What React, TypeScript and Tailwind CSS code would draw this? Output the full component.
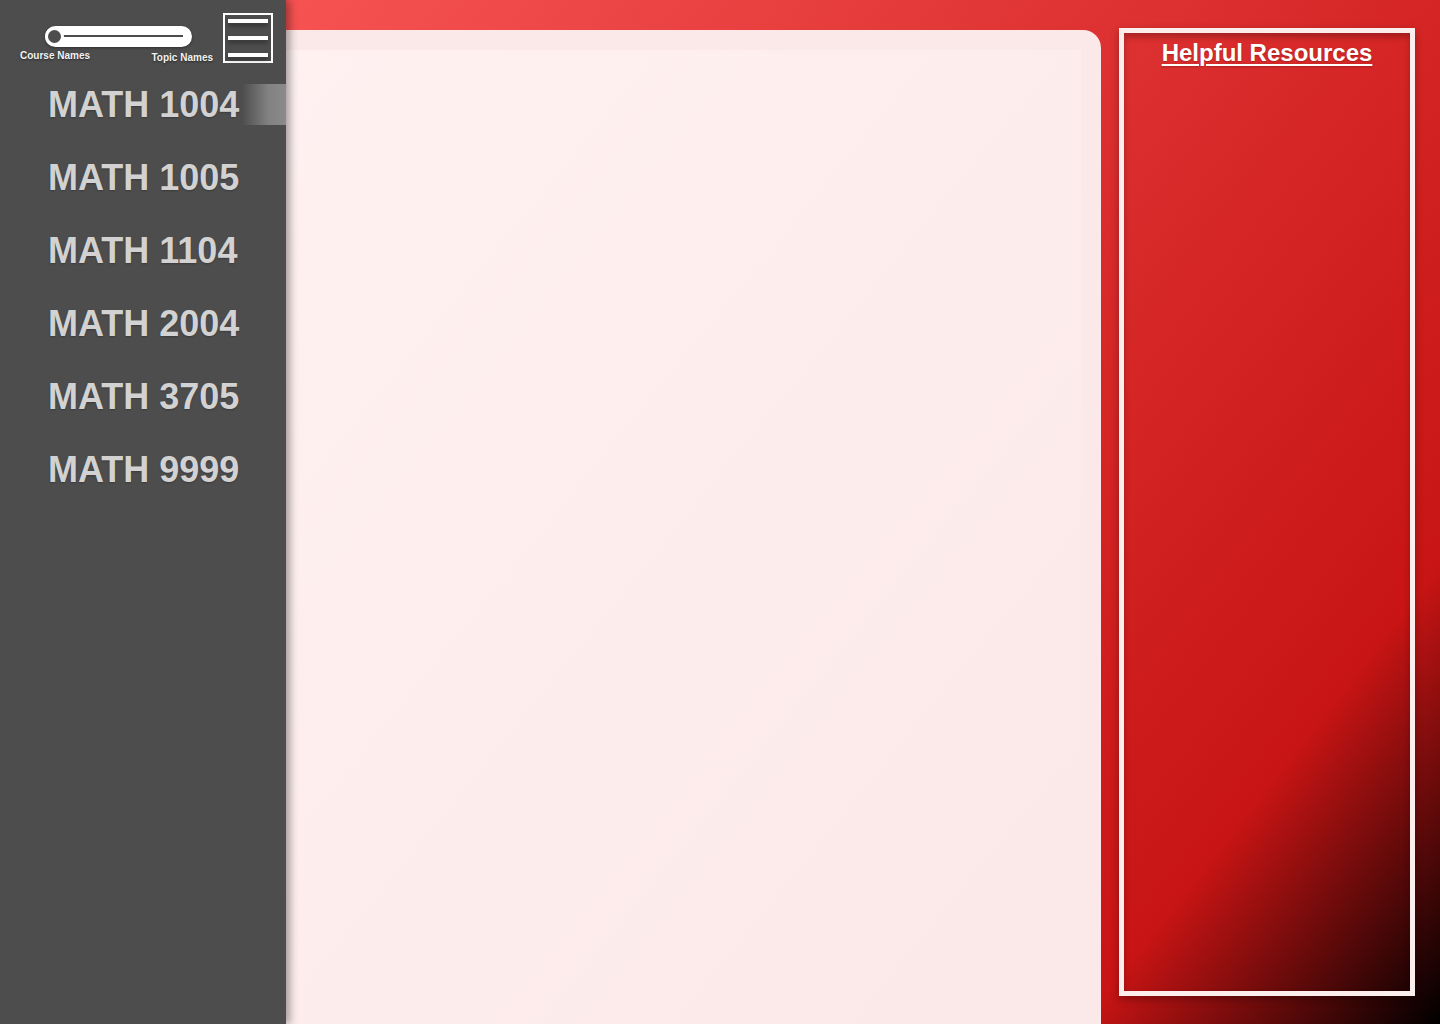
import { useState } from "react";

const courses = ["MATH 1004", "MATH 1005", "MATH 1104", "MATH 2004", "MATH 3705", "MATH 9999"];

export default function App() {
  const [active, setActive] = useState(0);

  return (
    <div
      className="flex h-[1024px] w-[1440px] overflow-hidden bg-[linear-gradient(128deg,#ff5e5e_0%,#c81414_84%,#000000_100%)]"
      style={{ fontFamily: '"Liberation Sans", Arial, sans-serif' }}
    >
      {/* Sidebar */}
      <aside className="relative z-10 flex h-full w-[286px] shrink-0 flex-col bg-[#4d4d4d] shadow-[4px_0_8px_rgba(0,0,0,0.35)]">
        <div className="flex h-[68px]">
          <div className="pl-[20px] pt-[26px]">
            <div className="relative ml-[25px] h-[21px] w-[147px] rounded-full bg-white shadow-[0_1px_3px_rgba(0,0,0,0.4)]">
              <div className="absolute left-[16px] right-[9px] top-[9px] h-[2px] bg-[#4d4d4d]" />
              <div className="absolute left-0 top-[1px] h-[19px] w-[19px] rounded-full border-[3px] border-white bg-[#4d4d4d]" />
            </div>
            <div className="flex w-[193px] justify-between text-[10px] font-bold leading-none text-[#f2f2f2] [text-shadow:0_1px_2px_rgba(0,0,0,0.5)]">
              <span className="mt-[4px]">Course Names</span>
              <span className="mt-[6px]">Topic Names</span>
            </div>
          </div>
          <button className="ml-auto mr-[13px] mt-[13px] flex h-[50px] w-[50px] flex-col items-center justify-between border-2 border-white py-[4px]">
            <span className="h-[4px] w-[40px] bg-white shadow-[0_3px_4px_rgba(0,0,0,0.35)]" />
            <span className="h-[4px] w-[40px] bg-white shadow-[0_3px_4px_rgba(0,0,0,0.35)]" />
            <span className="h-[4px] w-[40px] bg-white shadow-[0_3px_4px_rgba(0,0,0,0.35)]" />
          </button>
        </div>

        <nav className="flex flex-col">
          {courses.map((c, i) => (
            <button
              key={c}
              onClick={() => setActive(i)}
              className="relative flex h-[73px] items-center pl-[48px] text-left text-[36px] font-bold text-[#d2d2d2] [text-shadow:0_1px_2px_rgba(0,0,0,0.25)]"
            >
              {i === active && (
                <span className="absolute right-0 top-[16px] h-[41px] w-[44px] bg-[linear-gradient(to_right,rgba(140,140,140,0)_0%,#828282_60%,#8a8a8a_100%)]" />
              )}
              <span className="relative">{c}</span>
            </button>
          ))}
        </nav>
      </aside>

      {/* Main panel */}
      <main className="mt-[30px] flex h-[994px] w-[815px] shrink-0 rounded-tr-[18px] bg-[#fbe9e9] pr-[20px] pt-[20px]">
        <div className="h-full w-full bg-[linear-gradient(to_bottom_right,#fff1f1,#fbe8e8)]" />
      </main>

      {/* Resources */}
      <section className="pl-[18px] pt-[28px]">
        <div className="flex h-[968px] w-[296px] flex-col items-center border-[5px] border-[#fdeeee] shadow-[inset_0_4px_6px_rgba(0,0,0,0.25),0_3px_8px_rgba(0,0,0,0.3)]">
          <a
            href="#"
            className="mt-[6px] text-[24px] font-bold leading-[28px] text-white underline decoration-2 underline-offset-[3px] [text-shadow:0_1px_2px_rgba(0,0,0,0.25)]"
          >
            Helpful Resources
          </a>
        </div>
      </section>
    </div>
  );
}
